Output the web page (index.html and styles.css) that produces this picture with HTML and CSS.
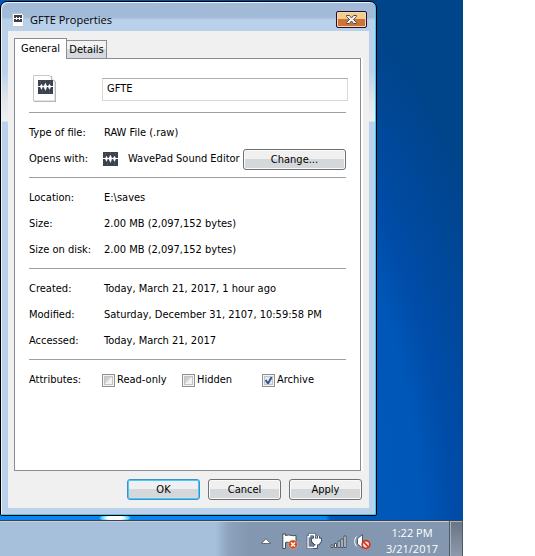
FILE: index.html
```
<!DOCTYPE html>
<html lang="en">
<head>
<meta charset="utf-8">
<title>GFTE Properties</title>
<link rel="stylesheet" href="styles.css">
</head>
<body>
<svg class="defs" aria-hidden="true">
  <symbol id="wave" viewBox="0 0 15 14">
    <rect width="15" height="14" fill="#3b414d"/>
    <path d="M0 6.500h15" stroke="#fff"/>
    <path d="M2 6.500l1.500-2.500 1.300 2.500L3.500 9.500zM5.500 6.500l2-3.500 1.500 3.500-1.500 4zM10 6.500L11.500 4 13 6.500l-1.500 3z" fill="#fff" stroke="#fff" stroke-width=".3"/>
    <path d="M2 2h1M7 1h1M12 2h1M4 12h1M11 12h1" stroke="#6b7280"/>
  </symbol>
</svg>
<div class="desktop">
  <main class="window">
    <header class="titlebar">
      <svg class="title-icon" viewBox="0 0 12 14" aria-hidden="true">
        <path d="M.5.5h9l2 2v11H.5z" fill="#fff" stroke="#c4c8cc"/>
        <rect x="2" y="2" width="8" height="7" fill="#3b414d"/>
        <path d="M2 5.500h8M4.500 4v3M7.500 4v3" stroke="#fff"/>
      </svg>
      <h1>GFTE Properties</h1>
      <button class="close" type="button" aria-label="Close">
        <svg viewBox="0 0 13 11" aria-hidden="true"><path d="M1.500 1.500h3l2 2.500 2-2.500h3v1l-3 3 3 3v1h-3l-2-2.500-2 2.500h-3v-1l3-3-3-3z" fill="#f4f4f4" stroke="#4d4d5a"/></svg>
      </button>
    </header>
    <form class="dialog">
      <nav class="tabs">
        <button class="tab active" type="button">General</button>
        <button class="tab" type="button">Details</button>
      </nav>
      <section class="panel">
        <div class="file">
          <svg class="file-icon" viewBox="0 0 24 28" aria-hidden="true">
            <path d="M1 1h16l6 6v20H1z" fill="#a9a9a9"/>
            <path d="M.5.5h16l5.500 6v19.500H.5z" fill="#fff" stroke="#c6c8c6"/>
            <path d="M18.500.8v5H22" fill="#eee" stroke="#b5b5b5"/>
            <use href="#wave" x="5" y="5" width="15" height="14"/>
          </svg>
          <input class="name" type="text" value="GFTE" aria-label="File name">
        </div>
        <dl class="group">
          <div class="row"><dt>Type of file:</dt><dd>RAW File (.raw)</dd></div>
          <div class="row"><dt>Opens with:</dt><dd class="opens"><svg class="app-icon" aria-hidden="true"><use href="#wave"/></svg><span>WavePad Sound Editor</span><button class="btn change" type="button">Change...</button></dd></div>
        </dl>
        <dl class="group">
          <div class="row"><dt>Location:</dt><dd>E:\saves</dd></div>
          <div class="row"><dt>Size:</dt><dd>2.00 MB (2,097,152 bytes)</dd></div>
          <div class="row"><dt>Size on disk:</dt><dd>2.00 MB (2,097,152 bytes)</dd></div>
        </dl>
        <dl class="group">
          <div class="row"><dt>Created:</dt><dd>Today, March 21, 2017, 1 hour ago</dd></div>
          <div class="row"><dt>Modified:</dt><dd>Saturday, December 31, 2107, 10:59:58 PM</dd></div>
          <div class="row"><dt>Accessed:</dt><dd>Today, March 21, 2017</dd></div>
        </dl>
        <dl class="group">
          <div class="row"><dt>Attributes:</dt><dd class="checks">
            <label><input type="checkbox">Read-only</label>
            <label><input type="checkbox">Hidden</label>
            <label><input type="checkbox" checked>Archive</label>
          </dd></div>
        </dl>
      </section>
      <footer class="actions">
        <button class="btn default" type="button">OK</button>
        <button class="btn" type="button">Cancel</button>
        <button class="btn" type="button">Apply</button>
      </footer>
    </form>
  </main>
  <footer class="taskbar">
    <div class="tray">
      <svg class="caret" viewBox="0 0 10 6" aria-hidden="true"><path d="M.5 5.500L5 .7l4.500 4.800z" fill="#fff" stroke="#4b5563" stroke-width=".8"/></svg>
      <svg viewBox="0 0 17 17" aria-hidden="true">
        <path d="M.8 1v14.500h2.700V9.500c3-1 4 1 7 0l3.500-.5V2.500c-4 1-6-1.500-10.500 0V1z" fill="#fff" stroke="#3e4a5c"/>
        <circle cx="11" cy="11.500" r="4.500" fill="#d5481c" stroke="#e8b9a0" stroke-width=".6"/>
        <path d="M9 9.500l4 4M13 9.500l-4 4" stroke="#fff" stroke-width="1.600"/>
      </svg>
      <svg viewBox="0 0 17 17" aria-hidden="true">
        <path d="M2 3.500h1.500v-2h5v2H10v11H2z" fill="#647388" stroke="#3e4a5c" stroke-width="2.500"/>
        <path d="M2 3.500h1.500v-2h5v2H10v11H2z" fill="#6f7f96" stroke="#fff" stroke-width="1.300"/>
        <path d="M8.500 3v3M12.500 3v3M6.500 6h8v2.500L12.500 11H9L6.500 8.500zM10.500 11v3.500H7" fill="#fff" stroke="#3e4a5c" stroke-width="2.600"/>
        <path d="M8.500 3v3M12.500 3v3M6.500 6h8v2.500L12.500 11H9L6.500 8.500zM10.500 11v3.500H7" fill="#fff" stroke="#fff"/>
      </svg>
      <svg viewBox="0 0 17 17" aria-hidden="true">
        <path d="M1 12h2v2.500H1zM4.500 10.500h2v4h-2zM8 8h2v6.500H8zM11 6h2v8.500h-2zM14 3h2v11.500h-2z" fill="#fff" stroke="#3e4a5c" stroke-width=".9"/>
      </svg>
      <svg viewBox="0 0 17 17" aria-hidden="true">
        <path d="M2.500 3.500C0 7 0 10 2.500 13.500" fill="none" stroke="#fff"/>
        <path d="M3.500 5.500L8.500 1.500v13.500l-5-4z" fill="#fff" stroke="#3e4a5c" stroke-width=".9"/>
        <circle cx="12" cy="11.500" r="3.800" fill="#f6dcd7" stroke="#d5331c" stroke-width="1.700"/>
        <path d="M9.500 9l5 5" stroke="#d5331c" stroke-width="1.700"/>
      </svg>
    </div>
    <time class="clock"><span>1:22 PM</span><span>3/21/2017</span></time>
    <button class="show-desktop" type="button" aria-label="Show desktop"></button>
  </footer>
</div>
</body>
</html>
```
FILE: styles.css
```
* { box-sizing: border-box; }
body {
  margin: 0;
  padding-right: 72px;
  background: #fff;
  color: #000;
  font: 11px/14px "DejaVu Sans Condensed", "Liberation Sans", sans-serif;
}
button, input { font: inherit; color: inherit; }
h1, dl, dd { margin: 0; }
.defs { display: none; }
.desktop {
  display: flex;
  flex-direction: column;
  min-height: 100vh;
  background:
    radial-gradient(ellipse 16px 4px at 115px calc(100% - 38px), #fff 50%, #41c8ee 90%, transparent),
    radial-gradient(ellipse 436px 600px at 0 100%, #0a84ee 75%, #0059ba 76%, #0057b8 97%, #004ca8 104%, #00489a 113%, #00448a 124%);
}
.window {
  flex: 1;
  display: flex;
  flex-direction: column;
  margin: 1px 86px 4px 0;
  padding: 0 7px 7px 6px;
  border: 1px solid #000;
  border-radius: 7px 7px 2px 2px;
  box-shadow: inset 1px 1px #e9f3fc, inset -1px -1px #41c8ee;
  background: linear-gradient(#a0bad7 15px, #b9d1ea 18px, #b9d1ea 68px, #e3e7ec 100px, #eeeff0 119px, #b9d1ea 120px);
}
.titlebar {
  display: flex;
  align-items: center;
  height: 29px;
  padding: 6px 2px 0 5px;
}
.title-icon { width: 12px; height: 14px; }
h1 {
  flex: 1;
  margin-left: 6px;
  font: 11px/16px "Open Sans", "Noto Sans", sans-serif;
}
.close {
  display: flex;
  align-items: center;
  justify-content: center;
  width: 31px;
  height: 17px;
  padding: 0;
  border: 1px solid #2a0a38;
  border-radius: 2px;
  box-shadow: inset 0 0 0 1px #f3d9b4;
  background: linear-gradient(#f3cf8b 50%, #cc7431 50%);
}
.close svg { width: 13px; height: 11px; }
.dialog {
  flex: 1;
  display: flex;
  flex-direction: column;
  margin: 0 0 0 1px;
  padding: 7px 7px 8px 6px;
  background: #f0f0f0;
}
.tabs { display: flex; align-items: flex-end; margin-bottom: -1px; }
.tab {
  height: 19px;
  width: 40px;
  padding: 1px 0 0;
  border: 1px solid #898c95;
  border-left: 0;
  background: linear-gradient(#f2f2f2 50%, #d5d9dd 50%);
}
.tab.active {
  z-index: 1;
  width: 53px;
  height: 21px;
  padding-bottom: 1px;
  border-left: 1px solid #898c95;
  border-bottom: 0;
  background: #fff;
}
.panel {
  flex: 1;
  padding: 0 14px;
  border: 1px solid #898c95;
  box-shadow: 2px 0 #fff;
  background: #fff;
  margin-right: 1px;
}
.file { display: flex; align-items: center; height: 53px; margin-right: -2px; padding: 7px 0 0 4px; }
.file-icon { width: 24px; height: 28px; }
.name {
  flex: 1;
  min-width: 0;
  height: 23px;
  margin-left: 45px;
  padding: 0 4px 2px;
  border: 1px solid #d6d8dc;
  border-top-color: #abadb3;
}
.group { padding: 6px 0; border-top: 1px solid #a0a09c; }
.row { display: flex; align-items: center; height: 26px; padding-top: 2px; }
dt { width: 75px; }
dd { flex: 1; }
.opens { display: flex; align-items: center; margin-left: -1px; }
.app-icon { width: 15px; height: 14px; margin-right: 10px; }
.btn {
  width: 73px;
  height: 21px;
  padding: 1px 0 0;
  border: 1px solid #707070;
  border-radius: 3px;
  box-shadow: inset 0 0 0 1px #fafafa;
  background: linear-gradient(#f0f0f0 48%, #d5d8db 50%);
}
.change { width: 103px; margin-left: auto; }
.btn.default { border-color: #3c8fd0; box-shadow: inset 0 0 0 1px #45cdf5; }
.checks { display: flex; margin-left: -2px; }
.checks label { display: flex; align-items: center; gap: 2px; width: 80px; }
.checks input {
  appearance: none;
  width: 13px;
  height: 13px;
  margin: 0;
  border: 1px solid #8e8f8f;
  box-shadow: inset 0 0 0 1px #f4f4f4, inset 0 0 0 2px #c0c4c8;
  background: linear-gradient(135deg, #cbcfd5 40%, #f2f2f2 55%);
}
.checks input:checked {
  background: url("data:image/svg+xml,%3Csvg xmlns='http://www.w3.org/2000/svg' viewBox='0 0 11 11'%3E%3Cpath d='M2.500 5l2.500 3.500 4-7' fill='none' stroke='%232f5597' stroke-width='2'/%3E%3C/svg%3E"), #e6e9ee;
}
.actions { display: flex; justify-content: flex-end; gap: 8px; margin-top: 8px; }
.taskbar {
  display: flex;
  height: 36px;
  border-top: 1px solid #38434f;
  box-shadow: inset 0 1px #c3d0df;
  background: linear-gradient(90deg, #a6c0dc 215px, #8da2bc 229px, #8497b0 250px);
  color: #fff;
}
.tray { display: flex; flex: 1; align-items: center; justify-content: flex-end; gap: 7px; padding: 5px 2px 0 0; }
.tray svg { width: 17px; height: 17px; }
.tray .caret { width: 10px; height: 6px; margin-right: 4px; }
.clock {
  display: flex;
  flex-direction: column;
  width: 76px;
  padding: 4px 0 0 2px;
  text-align: center;
  font: 11px/16px "Open Sans", "Noto Sans", sans-serif;
}
.show-desktop {
  width: 14px;
  padding: 0;
  border: 1px solid #4f5a68;
  border-width: 0 1px;
  box-shadow: inset 1px 1px #a9b4c2;
  background: linear-gradient(#687384, #8e9aab);
}
```
